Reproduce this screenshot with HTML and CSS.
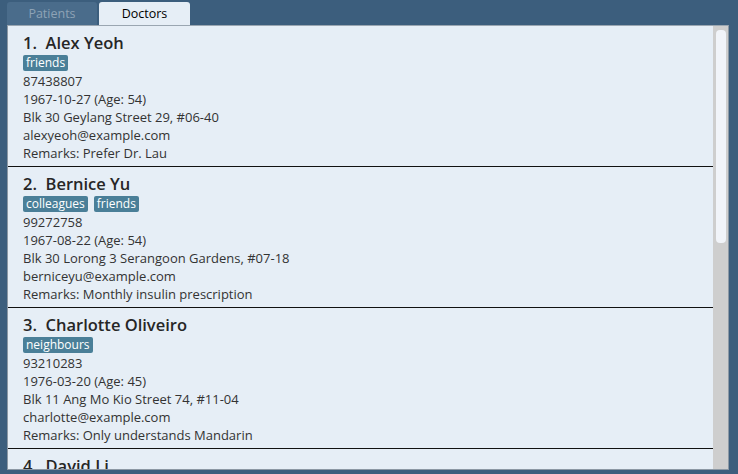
FILE: index.html
```html
<!DOCTYPE html>
<html>
<head>
<meta charset="utf-8">
<link rel="stylesheet" href="styles.css">
</head>
<body>
<div class="app">
  <div class="tabs">
    <div class="tab">Patients</div>
    <div class="tab active">Doctors</div>
  </div>
  <div class="panel">
    <div class="list">
      <div class="card">
        <div class="title">1.  Alex Yeoh</div>
        <div class="tags"><span class="tag">friends</span></div>
        <div class="line">87438807</div>
        <div class="line">1967-10-27 (Age: 54)</div>
        <div class="line">Blk 30 Geylang Street 29, #06-40</div>
        <div class="line">alexyeoh@example.com</div>
        <div class="line">Remarks: Prefer Dr. Lau</div>
      </div>
      <div class="card">
        <div class="title">2.  Bernice Yu</div>
        <div class="tags"><span class="tag">colleagues</span><span class="tag">friends</span></div>
        <div class="line">99272758</div>
        <div class="line">1967-08-22 (Age: 54)</div>
        <div class="line">Blk 30 Lorong 3 Serangoon Gardens, #07-18</div>
        <div class="line">berniceyu@example.com</div>
        <div class="line">Remarks: Monthly insulin prescription</div>
      </div>
      <div class="card">
        <div class="title">3.  Charlotte Oliveiro</div>
        <div class="tags"><span class="tag">neighbours</span></div>
        <div class="line">93210283</div>
        <div class="line">1976-03-20 (Age: 45)</div>
        <div class="line">Blk 11 Ang Mo Kio Street 74, #11-04</div>
        <div class="line">charlotte@example.com</div>
        <div class="line">Remarks: Only understands Mandarin</div>
      </div>
      <div class="card">
        <div class="title">4.  David Li</div>
      </div>
    </div>
    <div class="scrollbar"><div class="thumb"></div></div>
  </div>
</div>
</body>
</html>
```
FILE: styles.css
```css
html, body {
  margin: 0;
  padding: 0;
  background: #3c5e7d;
  font-family: "Open Sans", "DejaVu Sans", sans-serif;
}
.app {
  width: 738px;
  height: 474px;
  padding: 2px 9px 4px 7px;
  box-sizing: border-box;
  display: flex;
  flex-direction: column;
}
.tabs {
  display: flex;
  gap: 2px;
  height: 23px;
  flex: none;
}
.tab {
  width: 90px;
  background: #4a6c8b;
  color: #8ea3b6;
  font-size: 12.5px;
  line-height: 23px;
  text-align: center;
  border-radius: 3px 3px 0 0;
}
.tab.active {
  width: 91px;
  background: #e6eef6;
  color: #000;
}
.panel {
  flex: 1;
  min-height: 0;
  display: flex;
  background: #e6eef6;
  border: 1px solid #8c98a4;
  border-top-color: #9aa6b1;
  overflow: hidden;
}
.list {
  flex: 1;
  min-width: 0;
  overflow: hidden;
}
.card {
  padding: 6px 15px 4px 15px;
  border-bottom: 1px solid #111;
  color: #333;
}
.title {
  white-space: pre;
  font-size: 16.5px;
  font-weight: 600;
  line-height: 22px;
  color: #262626;
}
.tags {
  display: flex;
  gap: 6px;
  margin: 1px 0 1px;
  height: 16px;
}
.tag {
  background: #4a7f98;
  color: #fff;
  font-size: 12px;
  line-height: 16px;
  padding: 0 3px;
  border-radius: 2px;
}
.line {
  font-size: 13px;
  line-height: 18px;
}
.scrollbar {
  width: 15px;
  flex: none;
  background: #cecece;
  padding: 4px 2px 0 3px;
  box-sizing: border-box;
}
.thumb {
  height: 213px;
  background: #f1f4f9;
  border-radius: 4px;
}
```
